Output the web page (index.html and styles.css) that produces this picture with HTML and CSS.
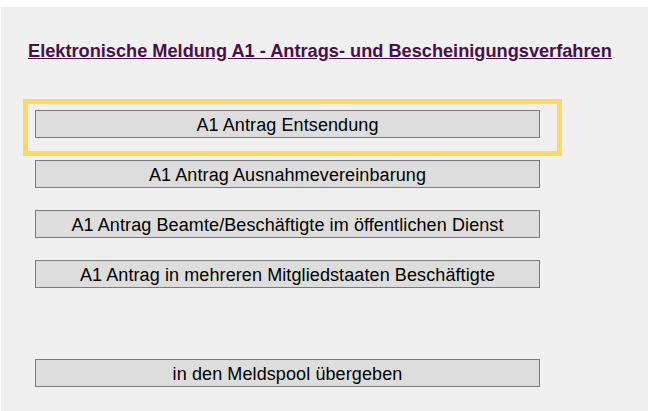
FILE: index.html
```html
<!DOCTYPE html>
<html lang="de">
<head>
<meta charset="utf-8">
<title>Elektronische Meldung A1</title>
<link rel="stylesheet" href="styles.css">
</head>
<body>
<main class="panel">
  <h1 class="title"><a href="#">Elektronische Meldung A1 - Antrags- und Bescheinigungsverfahren</a></h1>
  <div class="actions">
    <div class="highlight"><button class="btn">A1 Antrag Entsendung</button></div>
    <button class="btn">A1 Antrag Ausnahmevereinbarung</button>
    <button class="btn">A1 Antrag Beamte/Beschäftigte im öffentlichen Dienst</button>
    <button class="btn">A1 Antrag in mehreren Mitgliedstaaten Beschäftigte</button>
    <button class="btn btn-spool">in den Meldspool übergeben</button>
  </div>
</main>
</body>
</html>
```

FILE: styles.css
```css
html, body {
  margin: 0;
  padding: 0;
  background: #ffffff;
  height: 100%;
}
body {
  font-family: "Liberation Sans", Arial, sans-serif;
  padding: 7px 4px 0 1px;
  box-sizing: border-box;
}
.panel {
  background: #f0f0f0;
  height: 100%;
  box-sizing: border-box;
  padding: 34px 0 0 27px;
}
.title {
  margin: 0;
  font-size: 18.2px;
  letter-spacing: 0;
  line-height: 21px;
  font-weight: bold;
}
.title a {
  color: #4b0f48;
  text-decoration: underline;
}
.actions {
  display: flex;
  flex-direction: column;
  align-items: flex-start;
  margin-top: 48px;
  padding-left: 7px;
}
.highlight {
  position: relative;
  margin-bottom: 22px;
}
.highlight .btn {
  margin-bottom: 0;
}
.highlight::after {
  content: "";
  position: absolute;
  top: -11px;
  left: -12px;
  right: -22px;
  bottom: -18px;
  border: 5px solid #fdd867;
  pointer-events: none;
}
.btn {
  display: flex;
  align-items: center;
  justify-content: center;
  width: 505px;
  height: 28px;
  margin: 0 0 22px 0;
  padding: 2px 0 0 0;
  box-sizing: border-box;
  background: #dddddd;
  border: 1px solid #7a7a7a;
  border-radius: 0;
  font-family: "Liberation Sans", Arial, sans-serif;
  font-size: 18px;
  letter-spacing: 0.1px;
  color: #000000;
}
.btn-spool {
  margin-top: 49px;
}
```
